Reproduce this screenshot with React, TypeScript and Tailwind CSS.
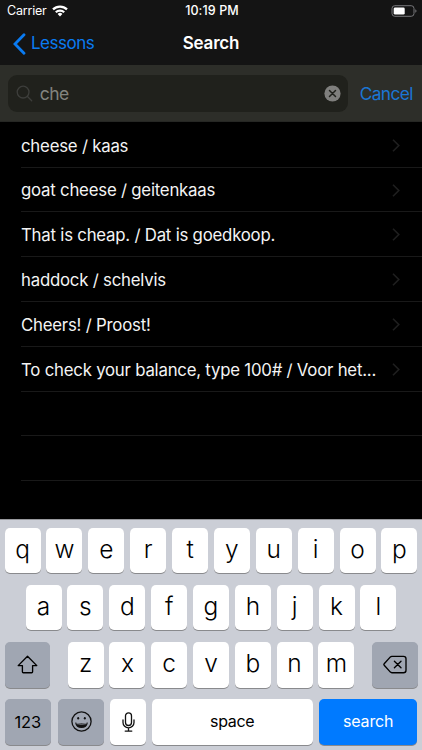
import React from 'react';
import clsx from 'clsx';

interface KeyProps {
  children: React.ReactNode;
  className?: string;
  label?: string;
}

const results = [
  'cheese / kaas',
  'goat cheese / geitenkaas',
  'That is cheap. / Dat is goedkoop.',
  'haddock / schelvis',
  'Cheers! / Proost!',
  'To check your balance, type 100# / Voor het...',
];

const Key: React.FC<KeyProps> = ({ children, className, label }) => (
  <button
    aria-label={label}
    className={clsx(
      'flex h-[45.6px] shrink-0 items-center justify-center rounded-[5px] shadow-[0_1px_0_#898a8d]',
      className
    )}
  >
    {children}
  </button>
);

const LetterKeys: React.FC<{ letters: string }> = ({ letters }) => (
  <>
    {letters.split('').map((letter) => (
      <Key key={letter} className="w-[36.1px] bg-white pb-[3px] text-[24.5px] font-[350]">
        {letter}
      </Key>
    ))}
  </>
);

const StatusBar = () => (
  <div className="grid h-[22px] grid-cols-3 items-center pl-[7px] pr-[5px] text-[12.5px]">
    <div className="flex items-center gap-[5px]">
      <span className="pt-px tracking-[-0.2px]">Carrier</span>
      <svg className="h-[12px] w-[16px]" viewBox="0 0 16 12" fill="none" stroke="#fff" strokeWidth="2.2">
        <path d="M1 4.4a10 10 0 0 1 14 0" />
        <path d="M3.8 7.3a6 6 0 0 1 8.4 0" />
        <path d="M8 11.4 5.6 9a3.4 3.4 0 0 1 4.8 0Z" fill="#fff" stroke="none" />
      </svg>
    </div>
    <span className="pt-px text-center font-medium tracking-[0.1px] whitespace-nowrap">10:19 PM</span>
    <svg className="h-[12px] w-[26px] justify-self-end" viewBox="0 0 26 12" fill="none">
      <rect x="1" y="0.7" width="22" height="10.6" rx="2.8" stroke="#77777a" />
      <rect x="2.7" y="2.4" width="11" height="7.2" rx="1.4" fill="#fff" />
      <path d="M24.3 4.2v3.6q1.2-.5 1.2-1.8t-1.2-1.8Z" fill="#77777a" />
    </svg>
  </div>
);

const NavBar = () => (
  <div className="grid h-[43px] grid-cols-3 items-center">
    <button className="flex items-center gap-[5px] pl-[13px] text-[17px] text-[#0a7bf2]">
      <svg className="h-[22px] w-[13px]" viewBox="0 0 13 22" fill="none" stroke="currentColor" strokeWidth="2.8" strokeLinecap="round">
        <path d="M11 1.8 2 11l9 9.2" />
      </svg>
      <span className="pt-px tracking-[-0.5px]">Lessons</span>
    </button>
    <h1 className="pt-px text-center text-[17px] font-semibold tracking-[-0.2px]">Search</h1>
  </div>
);

const SearchBar = () => (
  <div className="flex h-[57px] items-center border-b border-[#262724] bg-[#2d2e29] pl-[8.4px] pr-[9px]">
    <div className="mt-px flex h-[36.4px] w-[340px] items-center rounded-[9px] bg-[#20211c] pl-[8px] pr-[7px]">
      <svg className="h-[17px] w-[17px]" viewBox="0 0 17 17" fill="none" stroke="#3d3e3b" strokeWidth="1.3" strokeLinecap="round">
        <circle cx="7.1" cy="7.1" r="5.9" />
        <path d="m11.5 11.5 4.2 4.2" />
      </svg>
      <span className="ml-[6.4px] flex-1 pt-px text-[17.5px] tracking-[-0.6px] text-[#83847f]">che</span>
      <svg className="h-[17px] w-[17px]" viewBox="0 0 17 17" fill="none">
        <circle cx="8.5" cy="8.5" r="8.1" fill="#7f7f7d" />
        <path d="m5.5 5.5 6 6m0-6-6 6" stroke="#20211c" strokeWidth="1.5" strokeLinecap="round" />
      </svg>
    </div>
    <button className="ml-auto pt-[2px] text-[17.3px] tracking-[-0.55px] text-[#1b76d5]">Cancel</button>
  </div>
);

const ResultList = () => (
  <div className="h-[397px] overflow-hidden bg-black pt-[0.9px] pl-[21px]">
    {results.map((text) => (
      <div key={text} className="flex h-[44.8px] items-center justify-between border-b border-[#191919] pr-[22px] pt-px">
        <span className="pt-[2px] text-[16.8px] tracking-[-0.22px] whitespace-nowrap text-[#f4f4f4]">{text}</span>
        <svg className="h-[13px] w-[8px] shrink-0" viewBox="0 0 8 13" fill="none" stroke="#1f1f1f" strokeWidth="1.6">
          <path d="m1 .8 5.8 5.7L1 12.2" />
        </svg>
      </div>
    ))}
    <div className="h-[44.8px] border-b border-[#191919]" />
    <div className="h-[44.8px] border-b border-[#191919]" />
  </div>
);

const Keyboard = () => (
  <div className="flex h-[231px] flex-col gap-[11.5px] border-t border-[#98999d] bg-[#cbced6] px-[4.5px] pt-[7.8px] text-black">
    <div className="flex justify-between">
      <LetterKeys letters="qwertyuiop" />
    </div>
    <div className="flex justify-between px-[21px]">
      <LetterKeys letters="asdfghjkl" />
    </div>
    <div className="flex justify-between">
      <Key label="shift" className="w-[45.7px] bg-[#a0a6b2]">
        <svg className="h-[19px] w-[21px]" viewBox="0 0 21 19" fill="none" stroke="#000" strokeWidth="1.35" strokeLinejoin="round">
          <path d="M10.5 1.2 1.2 10.6h4.2v6.2q0 .9.9.9h8.4q.9 0 .9-.9v-6.2h4.2Z" />
        </svg>
      </Key>
      <div className="flex gap-[5.7px]">
        <LetterKeys letters="zxcvbnm" />
      </div>
      <Key label="delete" className="w-[45.7px] bg-[#a0a6b2]">
        <svg className="h-[19px] w-[24px]" viewBox="0 0 24 19" fill="none" stroke="#000" strokeWidth="1.35" strokeLinecap="round" strokeLinejoin="round">
          <path d="M8.8 1.3h11.7q2.5 0 2.5 2.5v11.4q0 2.5-2.5 2.5H8.8q-.8 0-1.4-.6L1.2 10.2q-.7-.7 0-1.4L7.4 1.9q.6-.6 1.4-.6Z" />
          <path d="m11.4 6.2 6.6 6.6m0-6.6-6.6 6.6" />
        </svg>
      </Key>
    </div>
    <div className="flex">
      <Key className="w-[46.7px] bg-[#a0a6b2] text-[16.5px] tracking-[-0.1px]">123</Key>
      <Key label="emoji" className="ml-[6.6px] w-[46.7px] bg-[#a0a6b2]">
        <svg className="h-[21px] w-[21px]" viewBox="0 0 21 21" fill="none" stroke="#111" strokeWidth="1.3">
          <circle cx="10.5" cy="10.5" r="9.6" />
          <ellipse cx="7.2" cy="7.3" rx="1" ry="1.3" fill="#111" stroke="none" />
          <ellipse cx="13.8" cy="7.3" rx="1" ry="1.3" fill="#111" stroke="none" />
          <path d="M4.1 11.4q6.4 1.7 12.8 0-.8 5.6-6.4 5.6t-6.4-5.6Z" fill="#111" stroke="none" />
          <path d="M5.5 12.6q5 1.2 10 0" stroke="#a0a6b2" strokeWidth=".9" />
        </svg>
      </Key>
      <Key label="dictate" className="ml-[5.6px] w-[36.1px] bg-white">
        <svg className="h-[20px] w-[13px]" viewBox="0 0 13 20" fill="none" stroke="#111" strokeWidth="1.3" strokeLinecap="round">
          <rect x="3.5" y=".8" width="6" height="12.7" rx="3" />
          <path d="M1 8v2.4a5.5 5.5 0 0 0 11 0V8M6.5 16v3M3.2 19.1h6.6" />
        </svg>
      </Key>
      <Key className="ml-[5.7px] w-[160.7px] bg-white pb-[2px] text-[16px] tracking-[-0.3px]">space</Key>
      <Key className="ml-[6.3px] w-[98.6px] bg-[#007aff] pb-[2px] text-[16px] tracking-[-0.2px] text-white">search</Key>
    </div>
  </div>
);

export default function App() {
  return (
    <div className="flex h-[750px] w-[422px] flex-col overflow-hidden bg-[#141414] font-['Inter',sans-serif] text-white">
      <StatusBar />
      <NavBar />
      <SearchBar />
      <ResultList />
      <Keyboard />
    </div>
  );
}
